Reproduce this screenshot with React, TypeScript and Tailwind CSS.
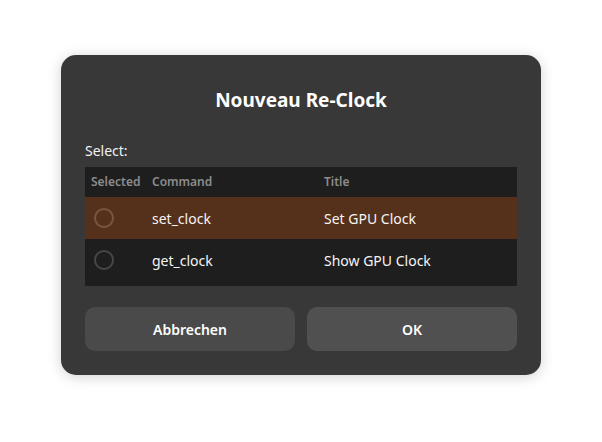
import React, { useState } from "react";

type Command = {
  name: string;
  title: string;
};

const commands: Command[] = [
  { name: "set_clock", title: "Set GPU Clock" },
  { name: "get_clock", title: "Show GPU Clock" },
];

const font = { fontFamily: '"Noto Sans", "Open Sans", sans-serif' };

const App = () => {
  const [active] = useState("set_clock");

  return (
    <div
      className="w-[602px] h-[442px] bg-white flex items-start justify-center pt-[55px]"
      style={font}
    >
      <div className="w-[480px] h-[320px] bg-[#383838] rounded-[15px] shadow-[0_2px_14px_rgba(0,0,0,0.18)] px-[24px] pt-[86px] pb-[24px] flex flex-col relative">
        <h1 className="absolute left-0 right-0 top-[32px] text-center text-[19px] leading-[26px] font-bold text-white">
          Nouveau Re-Clock
        </h1>

        <div className="text-[14px] leading-[20px] text-[#f2f2f2]">Select:</div>

        {/* command table */}
        <div className="mt-[6px] bg-[#1e1e1e] h-[119px] flex flex-col">
          <div className="flex items-center h-[30px] text-[12px] font-semibold text-[#8c8c8c]">
            <div className="w-[67px] pl-[6px]">Selected</div>
            <div className="w-[172px]">Command</div>
            <div className="flex-1">Title</div>
          </div>
          {commands.map((cmd) => {
            const selected = cmd.name === active;
            return (
              <div
                key={cmd.name}
                className={
                  selected
                    ? "flex items-center h-[42px] bg-[#55301a] text-[14px] text-[#f5f5f5]"
                    : "flex items-center h-[42px] text-[14px] text-[#f5f5f5]"
                }
              >
                <div className="w-[67px] pl-[9px] flex items-center">
                  <span
                    className={
                      selected
                        ? "w-[20px] h-[20px] rounded-full border-2 border-[#7a5640]"
                        : "w-[20px] h-[20px] rounded-full border-2 border-[#474747]"
                    }
                  />
                </div>
                <div className="w-[172px]">{cmd.name}</div>
                <div className="flex-1">{cmd.title}</div>
              </div>
            );
          })}
        </div>

        <div className="mt-auto flex gap-[12px]">
          <button className="flex-1 h-[44px] rounded-[10px] bg-[#4a4a4a] text-white text-[14px] font-semibold">
            Abbrechen
          </button>
          <button className="flex-1 h-[44px] rounded-[10px] bg-[#505050] text-white text-[14px] font-semibold">
            OK
          </button>
        </div>
      </div>
    </div>
  );
};

export default App;
